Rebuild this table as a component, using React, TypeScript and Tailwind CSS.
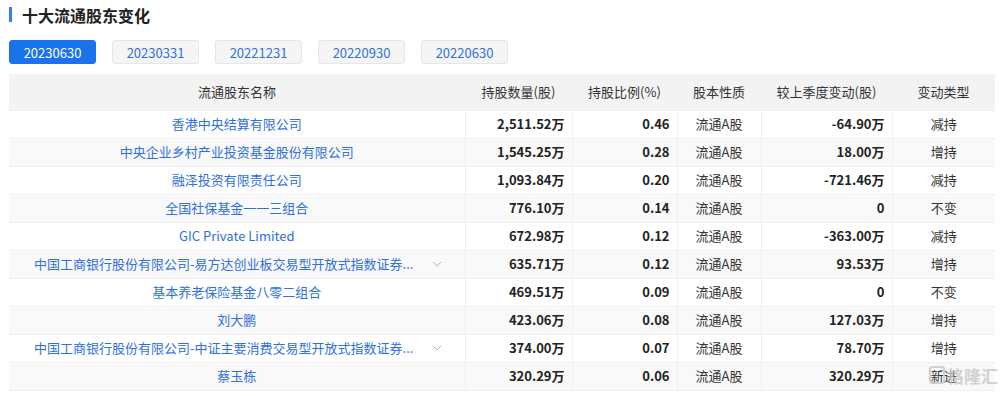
import React, { useState } from 'react';

type Row = {
  name: string;
  amount: string;
  ratio: string;
  nature: string;
  change: string;
  kind: string;
  expandable?: boolean;
};

const periods = ['20230630', '20230331', '20221231', '20220930', '20220630'];

const rows: Row[] = [
  { name: '香港中央结算有限公司', amount: '2,511.52万', ratio: '0.46', nature: '流通A股', change: '-64.90万', kind: '减持' },
  { name: '中央企业乡村产业投资基金股份有限公司', amount: '1,545.25万', ratio: '0.28', nature: '流通A股', change: '18.00万', kind: '增持' },
  { name: '融泽投资有限责任公司', amount: '1,093.84万', ratio: '0.20', nature: '流通A股', change: '-721.46万', kind: '减持' },
  { name: '全国社保基金一一三组合', amount: '776.10万', ratio: '0.14', nature: '流通A股', change: '0', kind: '不变' },
  { name: 'GIC Private Limited', amount: '672.98万', ratio: '0.12', nature: '流通A股', change: '-363.00万', kind: '减持' },
  { name: '中国工商银行股份有限公司-易方达创业板交易型开放式指数证券...', amount: '635.71万', ratio: '0.12', nature: '流通A股', change: '93.53万', kind: '增持', expandable: true },
  { name: '基本养老保险基金八零二组合', amount: '469.51万', ratio: '0.09', nature: '流通A股', change: '0', kind: '不变' },
  { name: '刘大鹏', amount: '423.06万', ratio: '0.08', nature: '流通A股', change: '127.03万', kind: '增持' },
  { name: '中国工商银行股份有限公司-中证主要消费交易型开放式指数证券...', amount: '374.00万', ratio: '0.07', nature: '流通A股', change: '78.70万', kind: '增持', expandable: true },
  { name: '蔡玉栋', amount: '320.29万', ratio: '0.06', nature: '流通A股', change: '320.29万', kind: '新进' },
];

function Chevron() {
  return (
    <svg className="w-[12px] h-[12px] text-[#b5b5b5]" viewBox="0 0 12 12" fill="none" stroke="currentColor" strokeWidth={1}>
      <path d="M2 4l4 4 4-4" />
    </svg>
  );
}

export default function App() {
  const [active, setActive] = useState(periods[0]);

  return (
    <div className="w-[1003px] h-[396px] bg-white overflow-hidden relative text-[#333] font-['Microsoft_YaHei','Noto_Sans_CJK_SC',sans-serif]">
      {/* Title */}
      <div className="flex items-center h-[28px] pl-[9px] pt-[1px]">
        <span className="w-[3px] h-[15px] bg-[#3b7cf0] mr-[10px]" />
        <h2 className="text-[16px] font-bold leading-none text-[#222]">十大流通股东变化</h2>
      </div>

      {/* Period tabs */}
      <div className="flex gap-[16px] pl-[9px] mt-[12px]">
        {periods.map((p) => (
          <button
            key={p}
            onClick={() => setActive(p)}
            className={`w-[87px] h-[24px] rounded-[3px] text-[13px] leading-none border ${
              active === p
                ? 'bg-[#1a73e8] border-[#1a73e8] text-white'
                : 'bg-[#f5f5f5] border-[#e6e6e6] text-[#2f6fe0]'
            }`}
          >
            {p}
          </button>
        ))}
      </div>

      {/* Table */}
      <div className="ml-[9px] mt-[10px] w-[986px]">
        <table className="table-fixed border-collapse w-full text-[13px]">
          <colgroup>
            <col className="w-[456px]" />
            <col className="w-[107px]" />
            <col className="w-[105px]" />
            <col className="w-[84px]" />
            <col className="w-[131px]" />
            <col className="w-[103px]" />
          </colgroup>
          <thead>
            <tr className="h-[36px] bg-[#f3f3f3] text-[#333]">
              <th className="font-normal text-center">流通股东名称</th>
              <th className="font-normal text-center">持股数量(股)</th>
              <th className="font-normal text-center">持股比例(%)</th>
              <th className="font-normal text-center">股本性质</th>
              <th className="font-normal text-center">较上季度变动(股)</th>
              <th className="font-normal text-center">变动类型</th>
            </tr>
          </thead>
          <tbody>
            {rows.map((r, i) => (
              <tr key={i} className={`h-[28px] ${i % 2 === 1 ? 'bg-[#f9f9f9]' : 'bg-white'}`}>
                <td className="border border-[#efefef] border-l-0 px-[8px]">
                  {r.expandable ? (
                    <div className="flex items-center">
                      <span className="flex-1 text-center text-[#2f6fe0] truncate pl-[14px]">{r.name}</span>
                      <span className="w-[40px] flex justify-center"><Chevron /></span>
                    </div>
                  ) : (
                    <div className="text-center text-[#2f6fe0]">{r.name}</div>
                  )}
                </td>
                <td className="border border-[#efefef] text-right pr-[7px] font-bold text-[#222]">{r.amount}</td>
                <td className="border border-[#efefef] text-right pr-[7px] font-bold text-[#222]">{r.ratio}</td>
                <td className="border border-[#efefef] text-center">{r.nature}</td>
                <td className="border border-[#efefef] text-right pr-[7px] font-bold text-[#222]">{r.change}</td>
                <td className="border border-[#efefef] border-r-0 text-center">{r.kind}</td>
              </tr>
            ))}
          </tbody>
        </table>
      </div>

      {/* Watermark */}
      <div className="absolute left-[929px] top-[366px] flex items-center gap-[2px] text-[#c8c8c8] opacity-80 pointer-events-none">
        <span className="w-[16px] h-[18px] border-[2px] border-[#c8c8c8] rounded-[3px]" />
        <span className="text-[17px] leading-none font-bold">格隆汇</span>
      </div>
    </div>
  );
}
